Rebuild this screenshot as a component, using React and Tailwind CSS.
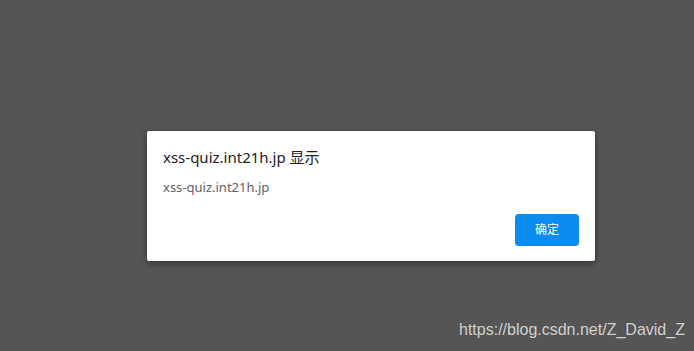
import React from 'react';

const font = { fontFamily: '"Noto Sans", "Noto Sans CJK SC", sans-serif' };

export default function App() {
  return (
    <div className="relative h-[351px] w-[694px] overflow-hidden bg-[#555555] pt-[131px] pl-[147px]" style={font}>
      <div className="w-[448px] h-[130px] rounded-[2px] bg-white shadow-[0_2px_6px_rgba(0,0,0,0.45)] px-4 pt-4 flex flex-col">
        <div className="text-[15px] leading-[20px] text-[#202124]">xss-quiz.int21h.jp 显示</div>
        <div className="mt-[11px] text-[13px] leading-[18px] text-[#5f6368]">xss-quiz.int21h.jp</div>
        <div className="mt-[18px] flex justify-end">
          <button className="w-16 h-8 rounded-[4px] bg-[#0a8cf0] text-white text-[12px]">确定</button>
        </div>
      </div>
      <div className="absolute left-[459px] top-[320px] text-[16px] leading-[20px] text-[#d0d0d0]" style={{ fontFamily: '"Liberation Sans", Arial, sans-serif' }}>
        https://blog.csdn.net/Z_David_Z
      </div>
    </div>
  );
}
